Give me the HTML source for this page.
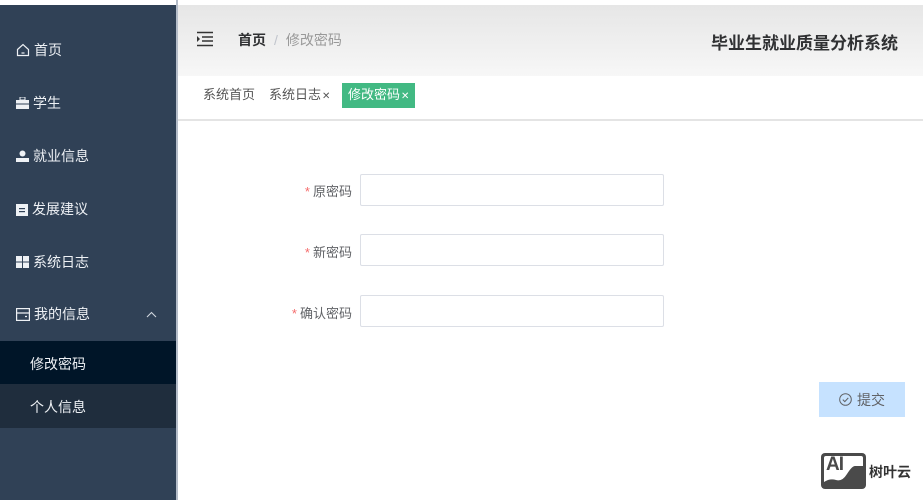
<!DOCTYPE html>
<html><head><meta charset="utf-8"><style>
*{margin:0;padding:0;box-sizing:border-box}
body{width:923px;height:500px;overflow:hidden;background:#fff;font-family:"Liberation Sans","Noto Sans CJK SC",sans-serif;position:relative}
.side{position:absolute;left:0;top:5px;width:176px;height:495px;background:#304156;color:#eef1f5;font-size:14px}
.side .it{position:absolute;left:16px;display:flex;align-items:center;gap:4px}
.bar{position:absolute;left:176px;top:0;width:2px;height:500px;background:#b4bcc8}
.top{position:absolute;left:178px;top:0;width:745px;height:5px;background:#fff}
.hdr{position:absolute;left:178px;top:5px;width:745px;height:71px;background:linear-gradient(#e6e6e6,#f7f7f7)}
.tabs{position:absolute;left:178px;top:76px;width:745px;height:45px;background:#fff;border-bottom:2px solid #e4e4e4}
.tab{position:absolute;top:7px;height:24px;line-height:24px;font-size:13px;color:#555}
.tab i{font-style:normal;font-size:10px;margin-left:1px}
.lbl{position:absolute;font-size:13px;color:#606266;text-align:right;width:100px;left:252px}
.lbl b{color:#f56c6c;font-weight:normal;margin-right:3px}
.inp{position:absolute;left:360px;width:304px;height:32px;border:1px solid #dcdfe6;border-radius:2px}
</style></head><body>
<div class="top"></div>
<div class="side">
 <div class="it" style="top:35px"><svg width="14" height="14" viewBox="0 0 14 14" fill="none" stroke="#eef1f5" stroke-width="1.2"><path d="M1.5 6.5L7 1.5l5.5 5V12.5h-11z"/><path d="M5.5 10h3"/></svg>首页</div>
 <div class="it" style="top:88px"><svg width="13" height="12" viewBox="0 0 13 12"><rect x="0" y="3" width="13" height="9" fill="#eef1f5"/><rect x="4" y="0" width="5" height="3" fill="none" stroke="#eef1f5"/><rect x="0" y="6.5" width="13" height="1" fill="#304156"/></svg>学生</div>
 <div class="it" style="top:141px"><svg width="13" height="12" viewBox="0 0 13 12"><circle cx="6.5" cy="3.5" r="3" fill="#eef1f5"/><rect x="0" y="8" width="13" height="4" fill="#eef1f5"/></svg>就业信息</div>
 <div class="it" style="top:194px"><svg width="12" height="13" viewBox="0 0 12 13"><rect x="0" y="1" width="12" height="12" fill="#eef1f5"/><rect x="3" y="5" width="6" height="1.2" fill="#304156"/><rect x="3" y="8" width="6" height="1.2" fill="#304156"/></svg>发展建议</div>
 <div class="it" style="top:247px"><svg width="13" height="12" viewBox="0 0 13 12" fill="#eef1f5"><rect width="6" height="5.5"/><rect x="7" width="6" height="5.5"/><rect y="6.5" width="6" height="5.5"/><rect x="7" y="6.5" width="6" height="5.5"/></svg>系统日志</div>
 <div class="it" style="top:299px"><svg width="14" height="13" viewBox="0 0 14 13" fill="none" stroke="#eef1f5" stroke-width="1.2"><rect x="0.6" y="0.6" width="12.8" height="11.8"/><path d="M0.6 5h12.8M9 8.5h2"/></svg>我的信息</div>
 <svg style="position:absolute;left:146px;top:306px" width="11" height="7" viewBox="0 0 11 7" fill="none" stroke="#cfd5dd" stroke-width="1.1"><path d="M1 6l4.5-4.5L10 6"/></svg>
 <div style="position:absolute;left:0;top:336px;width:176px;height:43px;background:#001528"></div>
 <div style="position:absolute;left:0;top:379px;width:176px;height:44px;background:#1f2d3d"></div>
 <div class="it" style="top:349px;left:30px">修改密码</div>
 <div class="it" style="top:392px;left:30px">个人信息</div>
</div>
<div class="bar"></div>
<div class="hdr">
 <svg style="position:absolute;left:18px;top:26px" width="18" height="16" viewBox="0 0 18 16" fill="none" stroke="#333" stroke-width="1.5"><path d="M1 1.5h16M6 6h11M6 10h11M1 14.5h16"/><path d="M1 5l3 3-3 3z" fill="#333" stroke="none"/></svg>
 <div style="position:absolute;left:60px;top:25px;font-size:14px;color:#303133"><b>首页</b><span style="color:#c0c4cc;margin:0 8px">/</span><span style="color:#999">修改密码</span></div>
 <div style="position:absolute;right:25px;top:24px;font-size:17px;font-weight:bold;color:#303133">毕业生就业质量分析系统</div>
</div>
<div class="tabs">
 <div class="tab" style="left:25px">系统首页</div>
 <div class="tab" style="left:91px">系统日志<i>✕</i></div>
 <div class="tab" style="left:164px;background:#42b983;color:#fff;padding:0 6px;height:25px">修改密码<i>✕</i></div>
</div>
<div class="lbl" style="top:181px"><b>*</b>原密码</div>
<div class="inp" style="top:174px"></div>
<div class="lbl" style="top:242px"><b>*</b>新密码</div>
<div class="inp" style="top:234px"></div>
<div class="lbl" style="top:303px"><b>*</b>确认密码</div>
<div class="inp" style="top:295px"></div>
<div style="position:absolute;left:819px;top:382px;width:86px;height:35px;background:#c6e2ff;color:#606266;font-size:14px;display:flex;align-items:center;justify-content:center;gap:5px"><svg width="13" height="13" viewBox="0 0 13 13" fill="none" stroke="#606266" stroke-width="1"><circle cx="6.5" cy="6.5" r="5.8"/><path d="M3.8 6.6l2 2 3.5-3.7"/></svg>提交</div>
<div style="position:absolute;left:821px;top:453px;width:45px;height:36px;background:#4a4a4a;border-radius:4px;overflow:hidden">
 <div style="position:absolute;left:3px;top:3px;width:39px;height:30px;background:#fff;border-radius:2px"></div>
 <div style="position:absolute;left:5px;top:1px;font-size:19px;font-weight:bold;color:#4a4a4a;font-family:'Liberation Sans',sans-serif;letter-spacing:-1px">AI</div>
 <svg style="position:absolute;left:3px;top:10px" width="39" height="23" viewBox="0 0 39 23"><path d="M0 23V19q6-4 12-2t11-6 8-8 8 0V23z" fill="#4a4a4a"/></svg>
</div>
<div style="position:absolute;left:869px;top:462px;font-size:14px;font-weight:bold;color:#333">树叶云</div>
</body></html>
